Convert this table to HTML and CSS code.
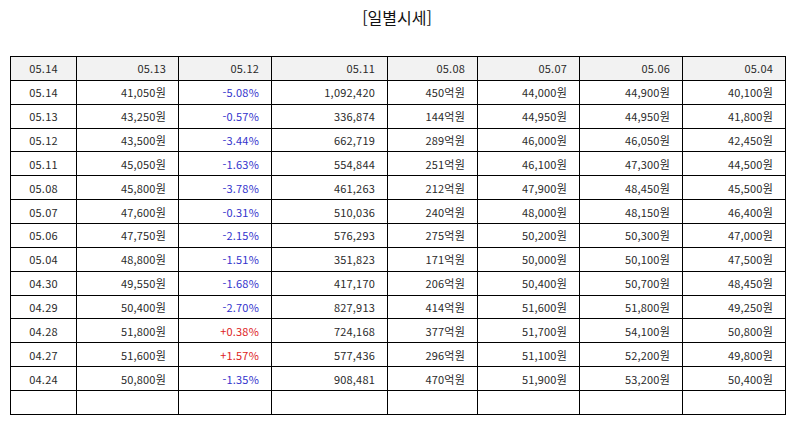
FILE: index.html
```html
<!DOCTYPE html>
<html lang="ko">
<head>
<meta charset="utf-8">
<link rel="stylesheet" href="styles.css">
</head>
<body>
<h1 class="title">[일별시세]</h1>
<table class="grid">
<colgroup>
<col class="c1"><col class="c2"><col class="c3"><col class="c4"><col class="c5"><col class="c6"><col class="c7"><col class="c8">
</colgroup>
<thead>
<tr><th class="date">05.14</th><th>05.13</th><th>05.12</th><th>05.11</th><th>05.08</th><th>05.07</th><th>05.06</th><th>05.04</th></tr>
</thead>
<tbody>
<tr><td class="date">05.14</td><td>41,050원</td><td class="down">-5.08%</td><td>1,092,420</td><td>450억원</td><td>44,000원</td><td>44,900원</td><td>40,100원</td></tr>
<tr><td class="date">05.13</td><td>43,250원</td><td class="down">-0.57%</td><td>336,874</td><td>144억원</td><td>44,950원</td><td>44,950원</td><td>41,800원</td></tr>
<tr><td class="date">05.12</td><td>43,500원</td><td class="down">-3.44%</td><td>662,719</td><td>289억원</td><td>46,000원</td><td>46,050원</td><td>42,450원</td></tr>
<tr><td class="date">05.11</td><td>45,050원</td><td class="down">-1.63%</td><td>554,844</td><td>251억원</td><td>46,100원</td><td>47,300원</td><td>44,500원</td></tr>
<tr><td class="date">05.08</td><td>45,800원</td><td class="down">-3.78%</td><td>461,263</td><td>212억원</td><td>47,900원</td><td>48,450원</td><td>45,500원</td></tr>
<tr><td class="date">05.07</td><td>47,600원</td><td class="down">-0.31%</td><td>510,036</td><td>240억원</td><td>48,000원</td><td>48,150원</td><td>46,400원</td></tr>
<tr><td class="date">05.06</td><td>47,750원</td><td class="down">-2.15%</td><td>576,293</td><td>275억원</td><td>50,200원</td><td>50,300원</td><td>47,000원</td></tr>
<tr><td class="date">05.04</td><td>48,800원</td><td class="down">-1.51%</td><td>351,823</td><td>171억원</td><td>50,000원</td><td>50,100원</td><td>47,500원</td></tr>
<tr><td class="date">04.30</td><td>49,550원</td><td class="down">-1.68%</td><td>417,170</td><td>206억원</td><td>50,400원</td><td>50,700원</td><td>48,450원</td></tr>
<tr><td class="date">04.29</td><td>50,400원</td><td class="down">-2.70%</td><td>827,913</td><td>414억원</td><td>51,600원</td><td>51,800원</td><td>49,250원</td></tr>
<tr><td class="date">04.28</td><td>51,800원</td><td class="up">+0.38%</td><td>724,168</td><td>377억원</td><td>51,700원</td><td>54,100원</td><td>50,800원</td></tr>
<tr><td class="date">04.27</td><td>51,600원</td><td class="up">+1.57%</td><td>577,436</td><td>296억원</td><td>51,100원</td><td>52,200원</td><td>49,800원</td></tr>
<tr><td class="date">04.24</td><td>50,800원</td><td class="down">-1.35%</td><td>908,481</td><td>470억원</td><td>51,900원</td><td>53,200원</td><td>50,400원</td></tr>
<tr><td class="date"></td><td></td><td></td><td></td><td></td><td></td><td></td><td></td></tr>
</tbody>
</table>
</body>
</html>
```
FILE: styles.css
```css
html, body {
  margin: 0;
  padding: 0;
  background: #fff;
}
body {
  font-family: "Noto Sans CJK KR", "Noto Sans", sans-serif;
  color: #2a2a2a;
}
.title {
  margin: 0;
  padding-top: 6px;
  height: 56px;
  box-sizing: border-box;
  text-align: center;
  font-size: 16px;
  font-weight: normal;
  line-height: 22px;
  color: #111;
}
.grid {
  margin-left: 10px;
  width: 776px;
  border-collapse: collapse;
  table-layout: fixed;
  font-size: 11px;
}
.c1 { width: 66px; }
.c2 { width: 102px; }
.c3 { width: 93px; }
.c4 { width: 116px; }
.c5 { width: 90px; }
.c6 { width: 102px; }
.c7 { width: 103px; }
.c8 { width: 103px; }
.grid tr {
  height: 23.87px;
}
.grid th, .grid td {
  border: 1px solid #000;
  padding: 0 12px 0 4px;
  text-align: right;
  font-weight: normal;
  white-space: nowrap;
  line-height: 14px;
  letter-spacing: 0.2px;
}
.grid th {
  background: #f2f2f2;
}
.grid .date {
  text-align: center;
  padding: 0;
}
.grid .down { color: #3333cc; }
.grid .up { color: #dd2222; }
```
